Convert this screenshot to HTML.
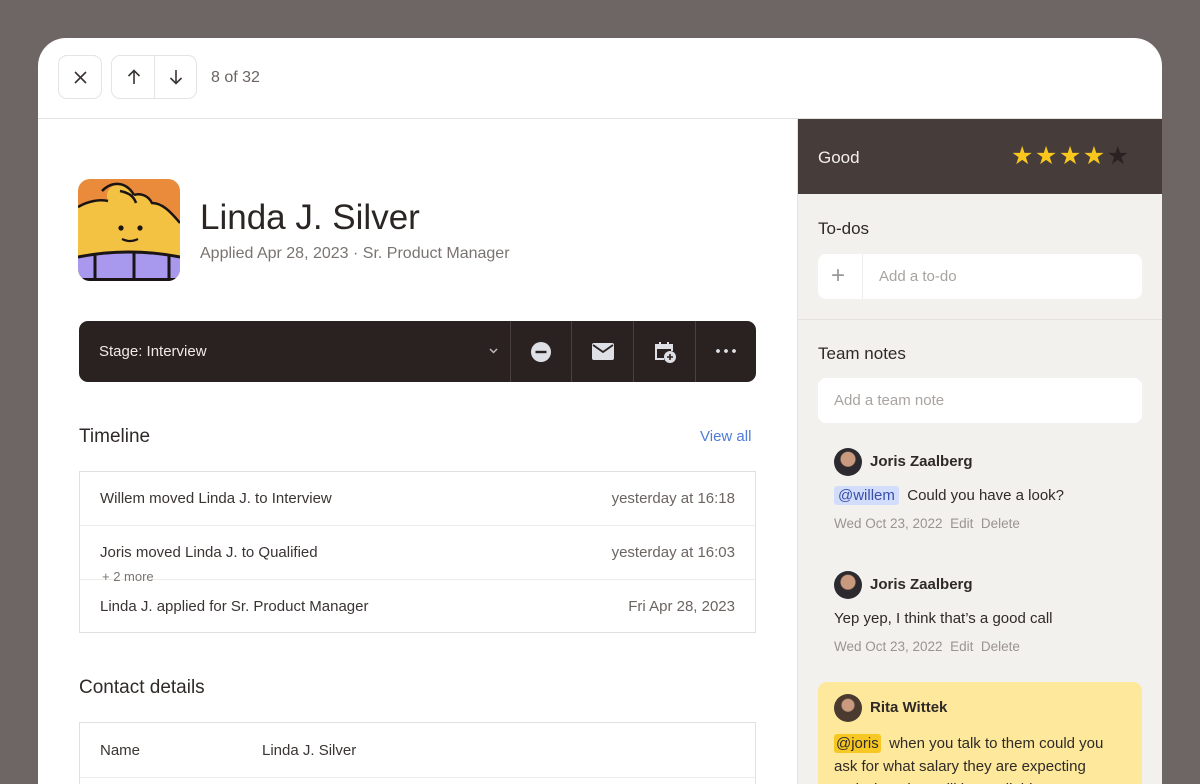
<!DOCTYPE html>
<html><head><style>
*{box-sizing:border-box;margin:0;padding:0}
html,body{width:1200px;height:784px;overflow:hidden}
body{background:#6e6664;font-family:"Liberation Sans",sans-serif;position:relative}
.card{position:absolute;left:38px;top:38px;width:1124px;height:746px;background:#fff;border-radius:28px 28px 0 0;overflow:hidden}
.a{position:absolute}
.btn{position:absolute;border:1px solid #e6e3e0;border-radius:9px;background:#fff}
.txt{color:#3a3432}
.row{position:absolute;left:0;right:0;height:54px;font-size:15px;color:#3a3432}
.row span{position:absolute;top:18px}
.note{position:absolute;left:36px;font-size:15px;color:#2f2a28}
.av{display:inline-block;width:28px;height:28px;border-radius:50%;background:radial-gradient(circle at 50% 40%,#c99a7e 0 7px,#2c2a2e 8px);vertical-align:middle;margin-right:8px}
.meta{font-size:13.5px;color:#9a9491}
</style></head><body>
<div class="card">
  <div class="btn" style="left:20px;top:17px;width:44px;height:44px"><svg class="a" style="left:15px;top:15px" width="13" height="13" viewBox="0 0 13 13"><path d="M1 1L12 12M12 1L1 12" stroke="#3a3432" stroke-width="1.6"/></svg></div>
  <div class="btn" style="left:73px;top:17px;width:86px;height:44px"><div class="a" style="left:42px;top:0;width:1px;height:42px;background:#e6e3e0"></div>
    <svg class="a" style="left:15px;top:13px" width="14" height="16" viewBox="0 0 14 16"><path d="M7 15V2M1.5 7L7 1.5 12.5 7" stroke="#3a3432" stroke-width="1.6" fill="none"/></svg>
    <svg class="a" style="left:57px;top:13px" width="14" height="16" viewBox="0 0 14 16"><path d="M7 1V14M1.5 9L7 14.5 12.5 9" stroke="#3a3432" stroke-width="1.6" fill="none"/></svg></div>
  <div class="a" style="left:173px;top:31px;font-size:16px;color:#6b6461">8 of 32</div>
  <div class="a" style="left:0;top:80px;width:1124px;height:1px;background:#e4e1de"></div>

  <svg class="a" style="left:40px;top:141px" width="102" height="102" viewBox="0 0 102 102">
    <defs><clipPath id="c"><rect width="102" height="102" rx="12"/></clipPath></defs>
    <g clip-path="url(#c)">
      <rect width="102" height="102" fill="#e98b3a"/>
      <path d="M0 28C10 22 22 20 30 22 26 12 34 4 44 6 52 8 56 12 56 16 62 14 70 16 74 24 84 24 92 32 102 44V102H0Z" fill="#f3c242"/>
      <path d="M0 28C10 22 22 20 30 22 M24 12C34 2 48 2 56 16 M42 12C52 14 56 18 58 24 M56 16C62 14 70 16 74 24 84 24 92 32 102 44" stroke="#1a1414" stroke-width="2.5" fill="none"/>
      <path d="M0 78Q51 68 102 78V102H0Z" fill="#a999ee"/>
      <path d="M0 78Q51 68 102 78" stroke="#1a1414" stroke-width="3" fill="none"/>
      <path d="M17 75V102M56 72V102M91 76V102" stroke="#1a1414" stroke-width="3"/>
      <rect x="0" y="99" width="102" height="3" fill="#1a1414"/>
      <circle cx="43" cy="49" r="2.6" fill="#1a1414"/><circle cx="62" cy="49" r="2.6" fill="#1a1414"/>
      <path d="M44 60Q52 64 60 60" stroke="#1a1414" stroke-width="2.2" fill="none"/>
    </g></svg>
  <div class="a txt" style="left:162px;top:160px;font-size:35px;color:#2b2624">Linda J. Silver</div>
  <div class="a" style="left:162px;top:207px;font-size:16px;color:#7a7471">Applied Apr 28, 2023 · Sr. Product Manager</div>

  <div class="a" style="left:41px;top:283px;width:677px;height:61px;background:#2a2121;border-radius:9px">
    <div class="a" style="left:20px;top:22px;font-size:15px;color:#efeae8">Stage: Interview</div>
    <svg class="a" style="left:410px;top:27px" width="9" height="6" viewBox="0 0 9 6"><path d="M1 1L4.5 4.5 8 1" stroke="#bbb" stroke-width="1.5" fill="none"/></svg>
    <div class="a" style="left:431px;top:0;width:1px;height:61px;background:#4a4040"></div>
    <div class="a" style="left:492px;top:0;width:1px;height:61px;background:#4a4040"></div>
    <div class="a" style="left:554px;top:0;width:1px;height:61px;background:#4a4040"></div>
    <div class="a" style="left:616px;top:0;width:1px;height:61px;background:#4a4040"></div>
    <svg class="a" style="left:451px;top:20px" width="22" height="22" viewBox="0 0 22 22"><circle cx="11" cy="11" r="10" fill="#dfe0e6"/><rect x="5.5" y="9.8" width="11" height="2.4" fill="#2a2121"/></svg>
    <svg class="a" style="left:513px;top:22px" width="22" height="17" viewBox="0 0 22 17"><rect width="22" height="17" rx="2" fill="#dfe0e6"/><path d="M1 2L11 9 21 2" stroke="#2a2121" stroke-width="1.8" fill="none"/></svg>
    <svg class="a" style="left:574px;top:19px" width="24" height="24" viewBox="0 0 24 24"><path d="M11 19H3V5H19V11" stroke="#dfe0e6" stroke-width="2" fill="none"/><rect x="3" y="5" width="16" height="4" fill="#dfe0e6"/><path d="M7 2V6M15 2V6" stroke="#dfe0e6" stroke-width="2"/><circle cx="17" cy="17" r="6" fill="#dfe0e6"/><path d="M17 14V20M14 17H20" stroke="#2a2121" stroke-width="1.6"/></svg>
    <div class="a" style="left:635px;top:28px;width:24px;height:4px;background:radial-gradient(circle,#dfe0e6 1.7px,transparent 2.1px) 0 0/8px 4px repeat-x"></div>
  </div>

  <div class="a" style="left:41px;top:388px;font-size:19px;color:#2f2a28">Timeline</div>
  <div class="a" style="left:662px;top:390px;font-size:15px;color:#4f7bd8">View all</div>
  <div class="a" style="left:41px;top:433px;width:677px;height:162px;border:1px solid #e2dfdc">
    <div class="row" style="top:0;border-bottom:1px solid #efedea"><span style="left:20px">Willem moved Linda J. to Interview</span><span style="right:20px;color:#6b6461">yesterday at 16:18</span></div>
    <div class="row" style="top:54px;border-bottom:1px solid #efedea"><span style="left:20px">Joris moved Linda J. to Qualified</span><span style="right:20px;color:#6b6461">yesterday at 16:03</span><span style="left:22px;top:43px;font-size:13px;color:#7a7471">+ 2 more</span></div>
    <div class="row" style="top:108px"><span style="left:20px">Linda J. applied for Sr. Product Manager</span><span style="right:20px;color:#6b6461">Fri Apr 28, 2023</span></div>
  </div>

  <div class="a" style="left:41px;top:639px;font-size:19px;color:#2f2a28">Contact details</div>
  <div class="a" style="left:41px;top:684px;width:677px;height:62px;border:1px solid #e2dfdc;border-bottom:none">
    <div class="a" style="left:20px;top:19px;font-size:15px;color:#3a3432">Name</div>
    <div class="a" style="left:182px;top:19px;font-size:15px;color:#3a3432">Linda J. Silver</div>
    <div class="a" style="left:0;top:54px;width:100%;height:1px;background:#efedea"></div>
  </div>

  <div class="a" style="left:759px;top:81px;width:365px;height:665px;background:#f3f1ee;border-left:1px solid #e4e1de;overflow:hidden">
    <div class="a" style="left:0;top:0;width:365px;height:75px;background:#463c3a">
      <div class="a" style="left:20px;top:29px;font-size:17px;color:#f3efec">Good</div>
      <div class="a" style="left:213px;top:22px;font-size:25px;letter-spacing:1.5px;color:#f8c61c">★★★★<span style="color:#2a2222">★</span></div>
    </div>
    <div class="a" style="left:20px;top:100px;font-size:17px;color:#2f2a28">To-dos</div>
    <div class="a" style="left:20px;top:135px;width:324px;height:45px;background:#fff;border-radius:8px">
      <div class="a" style="left:44px;top:0;width:1px;height:45px;background:#eee"></div>
      <div class="a" style="left:13px;top:8px;font-size:24px;color:#999;font-weight:300">+</div>
      <div class="a" style="left:61px;top:14px;font-size:15px;color:#a8a3a0">Add a to-do</div>
    </div>
    <div class="a" style="left:0;top:200px;width:365px;height:1px;background:#e4e1de"></div>
    <div class="a" style="left:20px;top:225px;font-size:17px;color:#2f2a28">Team notes</div>
    <div class="a" style="left:20px;top:259px;width:324px;height:45px;background:#fff;border-radius:8px">
      <div class="a" style="left:16px;top:14px;font-size:15px;color:#a8a3a0">Add a team note</div>
    </div>
    <div class="a" style="left:36px;top:329px;font-size:15px;font-weight:bold;color:#2f2a28"><span class="av"></span>Joris Zaalberg</div>
    <div class="note" style="top:368px"><span style="background:#d2dcfb;color:#3a4fa8;padding:1px 4px;border-radius:3px">@willem</span>&nbsp; Could you have a look?</div>
    <div class="note meta" style="top:397px">Wed Oct 23, 2022&nbsp;&nbsp;Edit&nbsp;&nbsp;Delete</div>
    <div class="a" style="left:36px;top:452px;font-size:15px;font-weight:bold;color:#2f2a28"><span class="av"></span>Joris Zaalberg</div>
    <div class="note" style="top:491px">Yep yep, I think that’s a good call</div>
    <div class="note meta" style="top:520px">Wed Oct 23, 2022&nbsp;&nbsp;Edit&nbsp;&nbsp;Delete</div>
    <div class="a" style="left:20px;top:563px;width:324px;height:102px;background:#fde89b;border-radius:9px 9px 0 0"></div>
    <div class="a" style="left:36px;top:575px;font-size:15px;font-weight:bold;color:#2f2a28"><span class="av" style="background:radial-gradient(circle at 50% 40%,#c99a7e 0 6px,#4a3a30 7px)"></span>Rita Wittek</div>
    <div class="note" style="top:613px;line-height:23px;width:280px;height:52px;overflow:hidden"><span style="background:#f7c824;padding:1px 2px;border-radius:3px">@joris</span>&nbsp; when you talk to them could you ask for what salary they are expecting and when they will be available to start?</div>
  </div>
</div>
</body></html>
